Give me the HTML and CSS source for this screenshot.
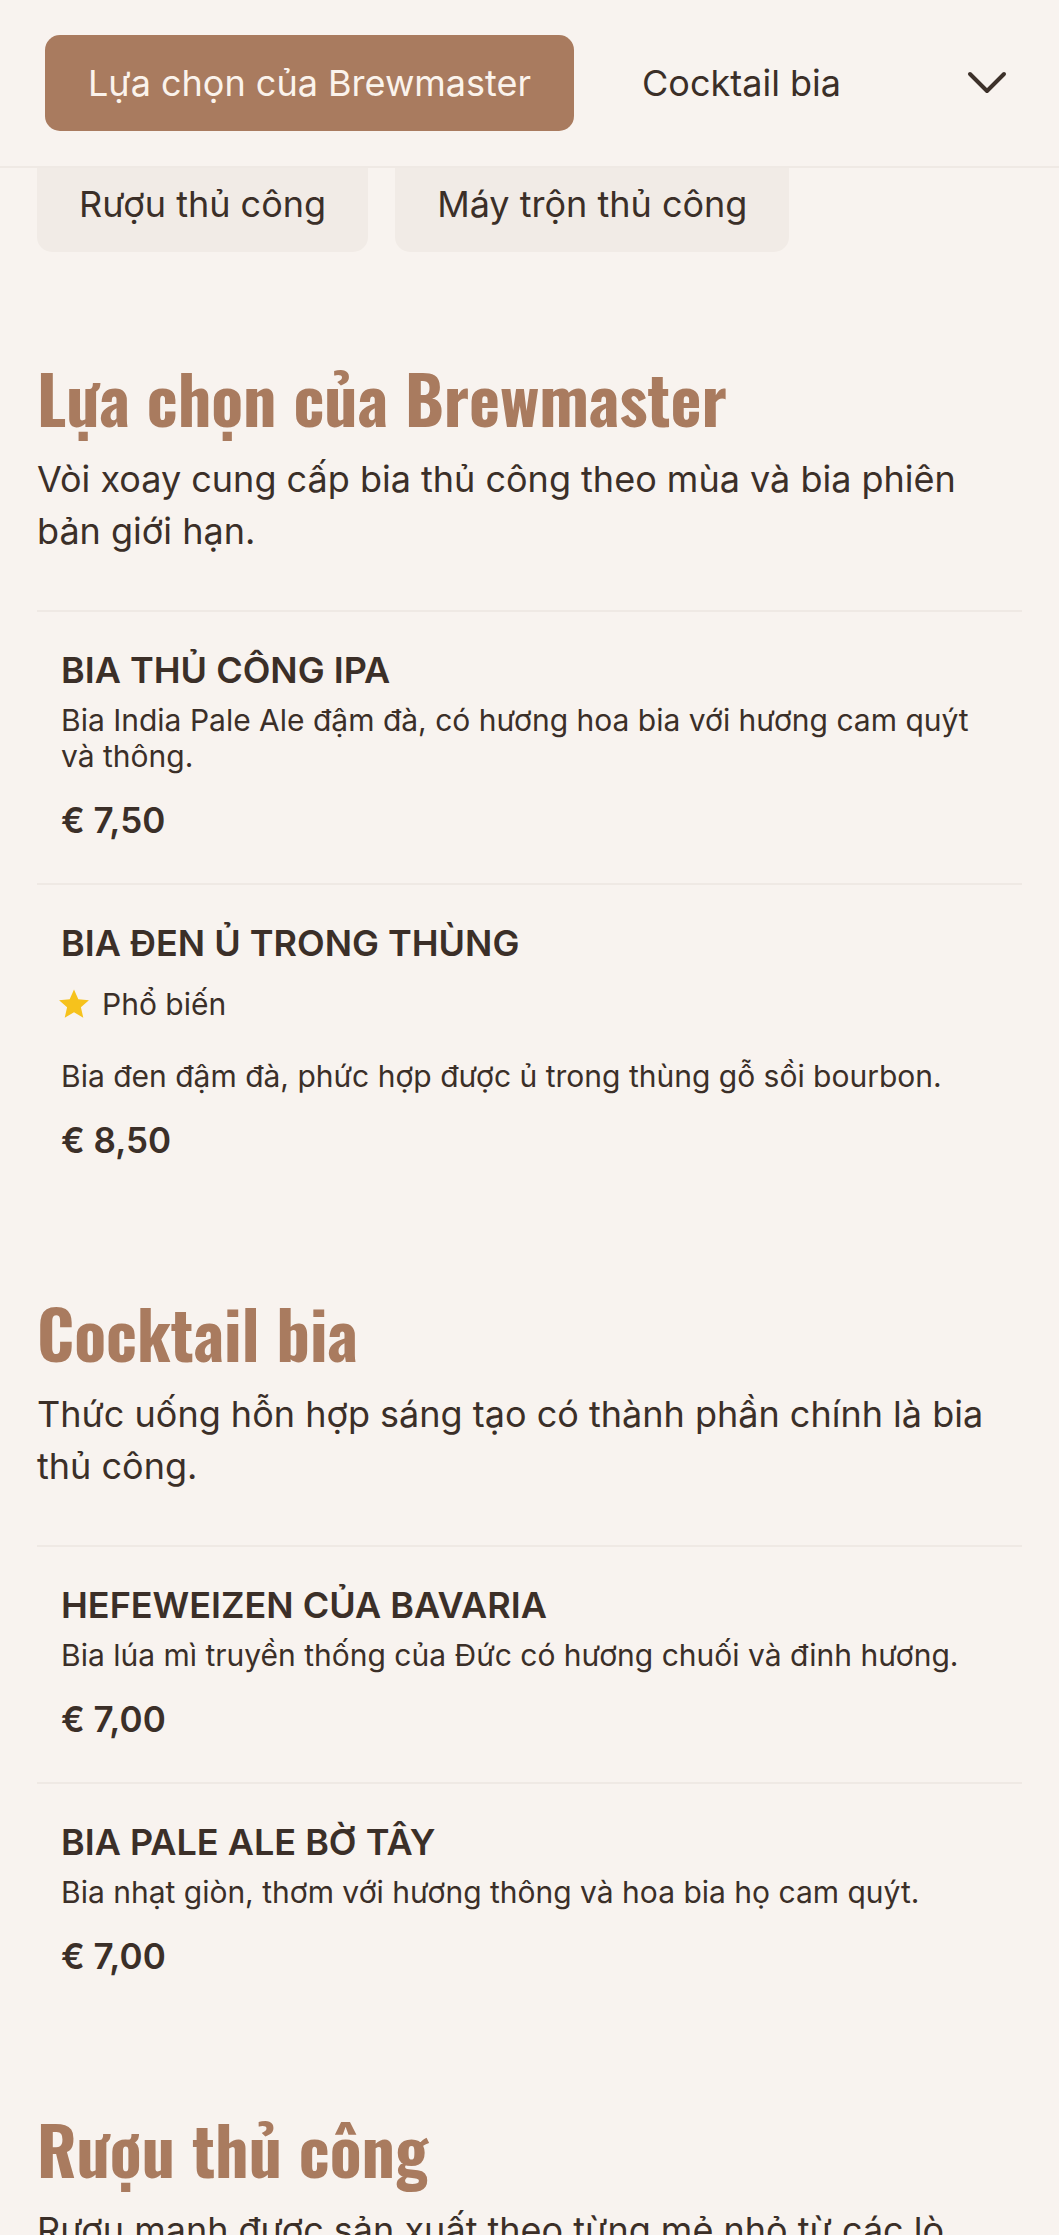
FILE: index.html
```html
<!DOCTYPE html>
<html lang="vi">
<head>
  <meta charset="UTF-8" />
  <title>Thực đơn bia thủ công</title>
  <link rel="stylesheet" href="styles.css">
</head>
<body>

<div class="navbar">
  <button class="tab active">Lựa chọn của Brewmaster</button>
  <button class="tab">Cocktail bia</button>
  <button class="toggle" aria-label="Thêm danh mục">
    <svg width="40" height="24" viewBox="0 0 40 24">
      <polyline points="3,3 20,20 37,3" fill="none" stroke="#3d312a" stroke-width="4" stroke-linecap="round" stroke-linejoin="round"/>
    </svg>
  </button>
</div>

<div class="more-tabs">
  <button class="tab more">Rượu thủ công</button>
  <button class="tab more">Máy trộn thủ công</button>
</div>

<div class="menu">

  <!-- BREWMASTER -->
  <div class="section">
    <h1>Lựa chọn của Brewmaster</h1>
    <p class="section-desc">Vòi xoay cung cấp bia thủ công theo mùa và bia phiên bản giới hạn.</p>

    <div class="item">
      <h2>BIA THỦ CÔNG IPA</h2>
      <p class="item-desc">Bia India Pale Ale đậm đà, có hương hoa bia với hương cam quýt và thông.</p>
      <div class="price">€ 7,50</div>
    </div>

    <div class="item">
      <h2>BIA ĐEN Ủ TRONG THÙNG</h2>
      <div class="badge">
        <svg width="30" height="30" viewBox="1.4 1.4 21.2 21.2">
          <path d="M12 1.8l3.05 6.9 7.5.7-5.67 4.98 1.68 7.36L12 17.9l-6.56 3.84 1.68-7.36L1.45 9.4l7.5-.7z" fill="#f6c21c"/>
        </svg>
        <span>Phổ biến</span>
      </div>
      <p class="item-desc">Bia đen đậm đà, phức hợp được ủ trong thùng gỗ sồi bourbon.</p>
      <div class="price">€ 8,50</div>
    </div>
  </div>

  <!-- COCKTAIL -->
  <div class="section">
    <h1>Cocktail bia</h1>
    <p class="section-desc">Thức uống hỗn hợp sáng tạo có thành phần chính là bia thủ công.</p>

    <div class="item">
      <h2>HEFEWEIZEN CỦA BAVARIA</h2>
      <p class="item-desc">Bia lúa mì truyền thống của Đức có hương chuối và đinh hương.</p>
      <div class="price">€ 7,00</div>
    </div>

    <div class="item">
      <h2>BIA PALE ALE BỜ TÂY</h2>
      <p class="item-desc">Bia nhạt giòn, thơm với hương thông và hoa bia họ cam quýt.</p>
      <div class="price">€ 7,00</div>
    </div>
  </div>

  <!-- SPIRITS -->
  <div class="section">
    <h1>Rượu thủ công</h1>
    <p class="section-desc">Rượu mạnh được sản xuất theo từng mẻ nhỏ từ các lò chưng cất địa phương.</p>
  </div>

</div>

</body>
</html>
```

FILE: styles.css
```css
body {
  margin: 0;
  font-family: Inter, "Noto Sans", sans-serif;
  background: #f8f3ef;
  color: #3b2f28;
}

button {
  font-family: inherit;
}

.navbar {
  height: 168px;
  box-sizing: border-box;
  padding: 0 52px 0 45px;
  display: flex;
  align-items: center;
  gap: 25px;
  border-bottom: 2px solid #efe9e4;
}

.tab {
  height: 96px;
  padding: 0 43px;
  border: none;
  border-radius: 15px;
  background: none;
  color: #3b2f28;
  font-size: 36px;
  white-space: nowrap;
  cursor: pointer;
}

.tab.active {
  background: #a97b5f;
  color: #fbf3ec;
}

.toggle {
  margin-left: auto;
  background: none;
  border: none;
  padding: 0;
  display: flex;
  cursor: pointer;
}

.more-tabs {
  display: flex;
  gap: 27px;
  padding: 0 37px;
  margin-bottom: 16px;
}

.tab.more {
  height: 84px;
  padding: 0 42px 12px;
  border-radius: 0 0 15px 15px;
  background: #f1ebe6;
}

.menu {
  padding: 0 37px;
}

.section {
  padding-top: 89px;
}

h1 {
  margin: 0;
  font-family: Oswald, "Liberation Sans Narrow", "DejaVu Sans Condensed", sans-serif;
  font-size: 66px;
  line-height: 80px;
  font-weight: 700;
  color: #a97b5f;
}

.section-desc {
  font-size: 36px;
  line-height: 52px;
  margin: 16px 0 53px;
}

.item {
  border-top: 2px solid #efe9e4;
  padding: 36px 24px 42px;
}

.item h2 {
  margin: 0;
  font-size: 36px;
  line-height: 44px;
  font-weight: 600;
}

.item-desc {
  margin: 10px 0 0;
  font-size: 30px;
  line-height: 36px;
}

.price {
  margin-top: 25px;
  font-size: 35px;
  line-height: 42px;
  font-weight: 600;
}

.badge {
  display: flex;
  align-items: center;
  gap: 13px;
  margin: 21px 0 36px -2px;
  font-size: 30px;
  line-height: 36px;
}
```
